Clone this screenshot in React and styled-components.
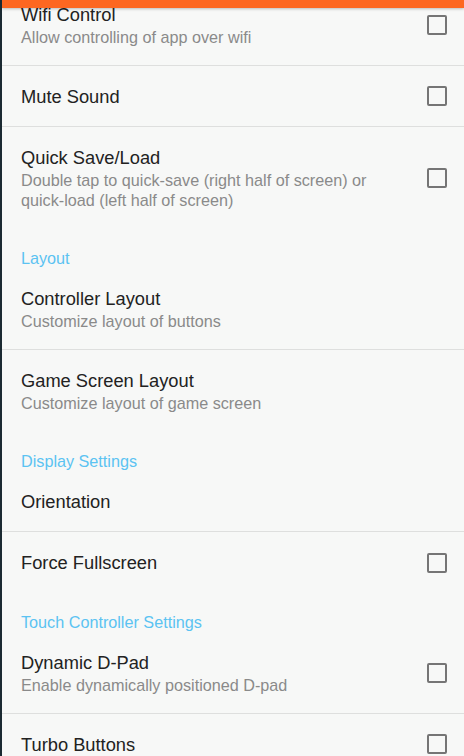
import React from "react";
import styled, { createGlobalStyle } from "styled-components";

const Global = createGlobalStyle`
  html, body { margin: 0; padding: 0; background: #f7f8f7; }
  body { font-family: "Liberation Sans", Arial, "Noto Sans", sans-serif; overflow: hidden; }
`;

const Screen = styled.div`
  width: 464px;
  height: 756px;
  box-sizing: border-box;
  border-left: 2px solid #1b2a32;
  background: #f7f8f7;
  overflow: hidden;
  position: relative;
`;

const TopBar = styled.div`
  position: absolute;
  top: 0;
  left: 0;
  right: 0;
  height: 8px;
  background: #fd6721;
  box-shadow: 0 1px 3px rgba(0, 0, 0, 0.25);
  z-index: 2;
`;

const List = styled.div`
  display: flex;
  flex-direction: column;
  margin-top: -16px;
`;

const Row = styled.div`
  display: flex;
  align-items: center;
  padding: 0 17px 0 19px;
  border-bottom: ${(p) => (p.$divider ? "1px solid #dedfde" : "none")};
`;

const TextBlock = styled.div`
  flex: 1;
  display: flex;
  flex-direction: column;
  padding: 20px 0 ${(p) => (p.$divider ? "18px" : "19px")};
`;

const Title = styled.div`
  font-size: 18.3px;
  line-height: 22px;
  height: 22px;
  color: #222;
`;

const Summary = styled.div`
  font-size: 16.2px;
  line-height: 20px;
  margin-top: 1px;
  color: #8a8a8a;
  padding-right: 40px;
`;

const Box = styled.div`
  width: 20px;
  height: 20px;
  box-sizing: border-box;
  border: 2px solid #757575;
  border-radius: 2px;
  flex-shrink: 0;
`;

const Header = styled.div`
  padding: 19px 19px 0;
  height: 39px;
  box-sizing: border-box;
  font-size: 16.2px;
  line-height: 20px;
  color: #5bc3f2;
`;

const Pref = ({ title, summary, check, divider }) => (
  <Row $divider={divider}>
    <TextBlock $divider={divider}>
      <Title>{title}</Title>
      {summary && <Summary>{summary}</Summary>}
    </TextBlock>
    {check && <Box />}
  </Row>
);

export default function App() {
  return (
    <>
      <Global />
      <Screen>
        <TopBar />
        <List>
          <Pref title="Wifi Control" summary="Allow controlling of app over wifi" check divider />
          <Pref title="Mute Sound" check divider />
          <Pref
            title="Quick Save/Load"
            summary="Double tap to quick-save (right half of screen) or quick-load (left half of screen)"
            check
          />
          <Header>Layout</Header>
          <Pref title="Controller Layout" summary="Customize layout of buttons" divider />
          <Pref title="Game Screen Layout" summary="Customize layout of game screen" />
          <Header>Display Settings</Header>
          <Pref title="Orientation" divider />
          <Pref title="Force Fullscreen" check />
          <Header>Touch Controller Settings</Header>
          <Pref title="Dynamic D-Pad" summary="Enable dynamically positioned D-pad" check divider />
          <Pref title="Turbo Buttons" check divider />
        </List>
      </Screen>
    </>
  );
}
